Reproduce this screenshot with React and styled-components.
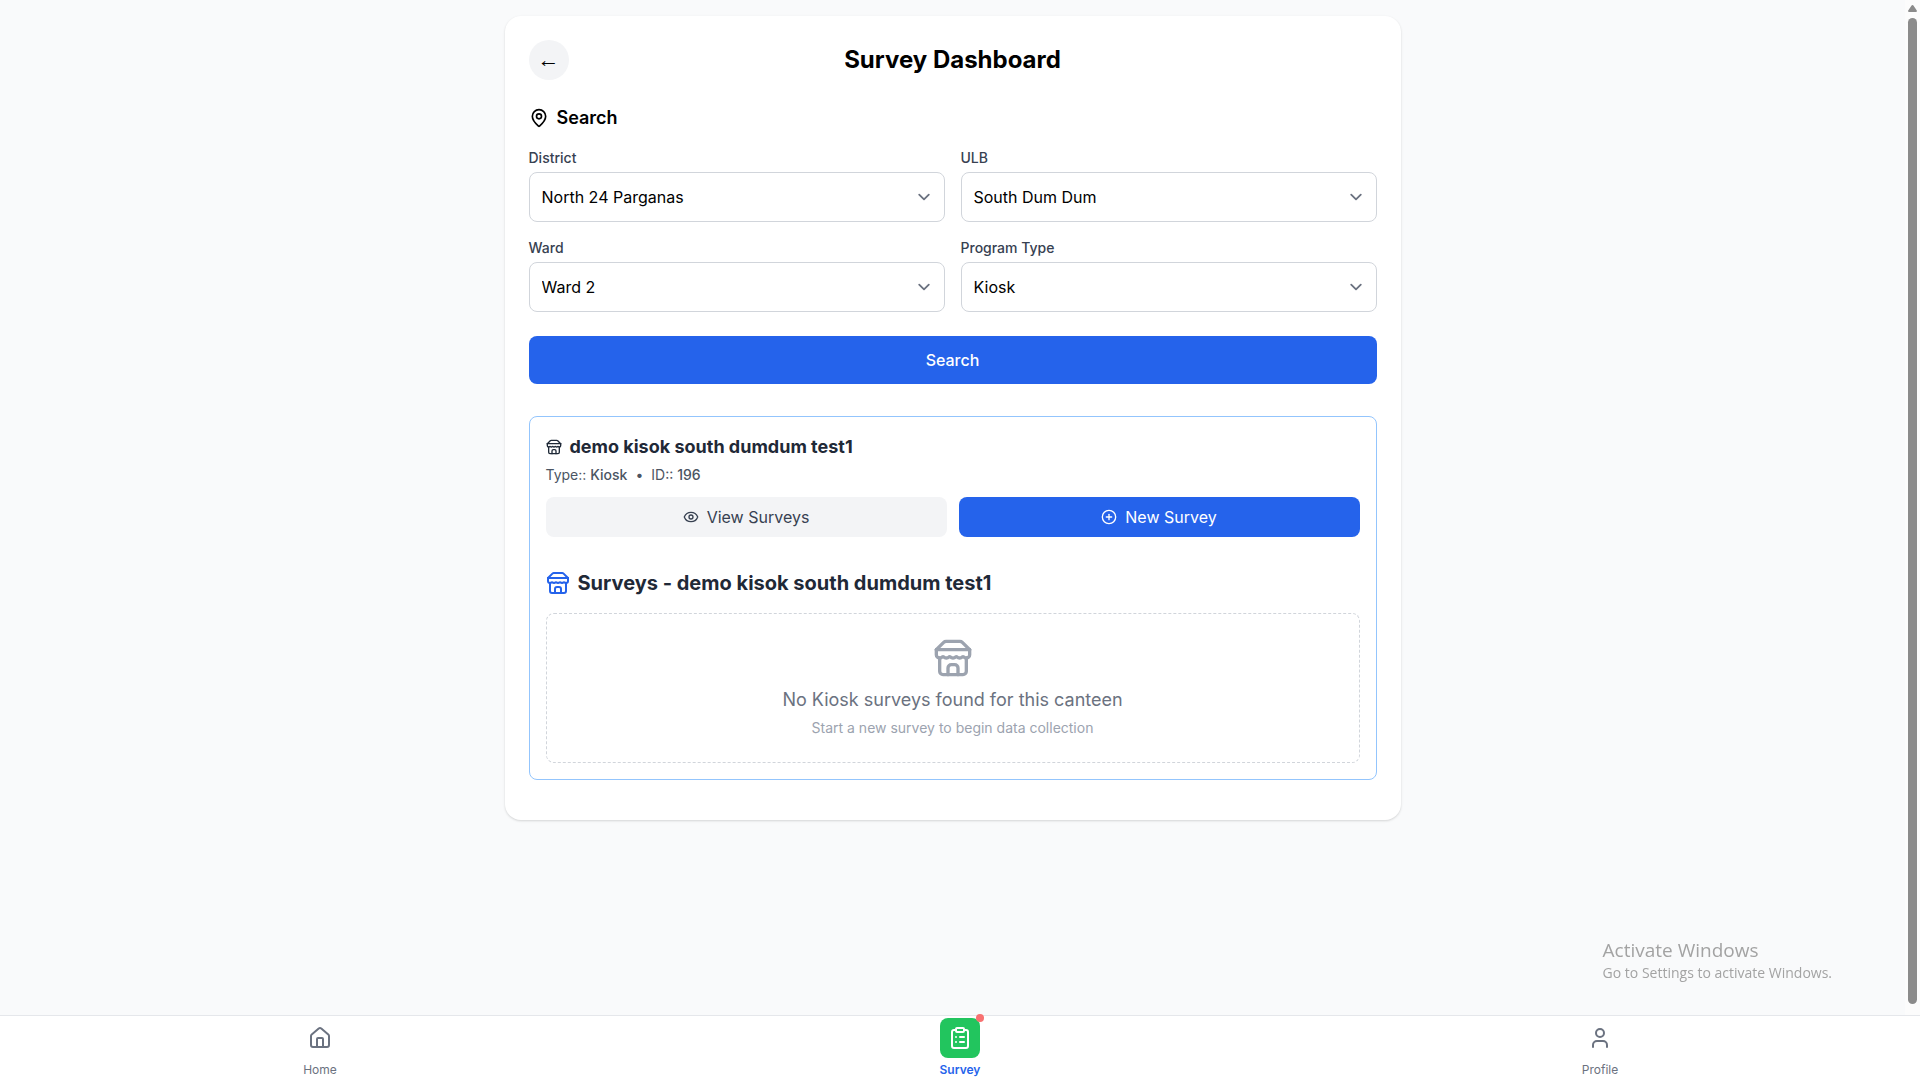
import React, { useState } from 'react'
import styled, { createGlobalStyle } from 'styled-components';
import { MapPin, Eye, CirclePlus, House, ClipboardList, User } from 'lucide-react';

const GlobalStyle = createGlobalStyle`
    *, *::before, *::after {
        box-sizing: border-box;
    }
    body {
        margin: 0;
        background: #f9fafb;
        color: #000;
        font-family: Inter, "Liberation Sans", sans-serif;
        font-size: 16px;
        line-height: 24px;
    }
    h1, h2, h3, p {
        margin: 0;
    }
    button, select {
        font: inherit;
    }
`;

const Page = styled.div`
    display: flex;
    flex-direction: column;
    min-height: 100vh;
`;

const ScrollArea = styled.div`
    flex: 1;
    display: flex;
`;

const Main = styled.main`
    flex: 1;
    padding: 16px;
`;

const ScrollBar = styled.div`
    width: 15px;
    display: flex;
    flex-direction: column;
    align-items: center;
    gap: 6px;
    padding: 5px 0 11px;
    background: #fcfcfc;
`;

const ScrollArrow = styled.svg`
    width: 9px;
    height: 7px;
    fill: #8b8b8b;
`;

const ScrollThumb = styled.div`
    flex: 1;
    width: 9px;
    border-radius: 5px;
    background: #8b8b8b;
`;

const Card = styled.div`
    max-width: 896px;
    margin: 0 auto;
    padding: 24px 24px 40px;
    border-radius: 16px;
    background: #fff;
    box-shadow: 0 1px 3px rgba(0, 0, 0, 0.1), 0 1px 2px rgba(0, 0, 0, 0.06);
`;

const Header = styled.header`
    display: grid;
    grid-template-columns: 40px 1fr 40px;
    align-items: center;
    margin-bottom: 24px;
`;

const BackButton = styled.button`
    width: 40px;
    height: 40px;
    padding: 0;
    border: none;
    border-radius: 50%;
    background: #f3f4f6;
    color: #000;
    font-family: "Liberation Serif", serif;
    font-size: 22px;
    cursor: pointer;
`;

const Title = styled.h1`
    font-size: 24px;
    line-height: 32px;
    font-weight: 700;
    text-align: center;
`;

const SectionTitle = styled.h2`
    display: flex;
    align-items: center;
    gap: 8px;
    margin-bottom: 16px;
    font-size: 18px;
    line-height: 28px;
    font-weight: 600;
`;

const Fields = styled.div`
    display: grid;
    grid-template-columns: 1fr 1fr;
    gap: 16px;
`;

const Field = styled.div`
    display: flex;
    flex-direction: column;
    gap: 4px;
`;

const Label = styled.label`
    font-size: 14px;
    line-height: 20px;
    font-weight: 500;
    color: #374151;
`;

const SelectWrap = styled.div`
    display: grid;
    align-items: center;
    & > * {
        grid-area: 1 / 1;
    }
`;

const Select = styled.select`
    appearance: none;
    width: 100%;
    height: 50px;
    padding: 0 40px 0 12px;
    border: 1px solid #d1d5db;
    border-radius: 8px;
    background: #fff;
    color: #000;
`;

const Chevron = styled.svg`
    justify-self: end;
    width: 24px;
    height: 24px;
    margin-right: 9px;
    fill: none;
    stroke: #6b7280;
    stroke-width: 1.5;
    stroke-linecap: round;
    stroke-linejoin: round;
    pointer-events: none;
`;

const SearchButton = styled.button`
    width: 100%;
    height: 48px;
    margin: 24px 0 32px;
    border: none;
    border-radius: 8px;
    background: #2563eb;
    color: #fff;
    font-weight: 500;
    cursor: pointer;
`;

const Result = styled.section`
    padding: 16px;
    border: 1px solid #93c5fd;
    border-radius: 8px;
`;

const KioskName = styled.h3`
    display: flex;
    align-items: center;
    gap: 8px;
    font-size: ${props => props.$large ? '20px' : '18px'};
    line-height: 28px;
    font-weight: 700;
    color: #1f2937;
`;

const Meta = styled.p`
    display: flex;
    gap: 8px;
    margin: 4px 0 12px;
    font-size: 14px;
    line-height: 20px;
    color: #4b5563;
    & b {
        font-weight: 500;
    }
`;

const Actions = styled.div`
    display: grid;
    grid-template-columns: 1fr 1fr;
    gap: 12px;
    margin-bottom: 32px;
`;

const ActionButton = styled.button`
    display: flex;
    align-items: center;
    justify-content: center;
    gap: 8px;
    height: 40px;
    border: none;
    border-radius: 8px;
    background: ${props => props.$primary ? '#2563eb' : '#f3f4f6'};
    color: ${props => props.$primary ? '#fff' : '#374151'};
    cursor: pointer;
`;

const Empty = styled.div`
    display: flex;
    flex-direction: column;
    align-items: center;
    margin-top: 16px;
    padding: 24px;
    border: 1px dashed #d1d5db;
    border-radius: 8px;
    color: #9ca3af;
`;

const EmptyTitle = styled.p`
    margin: 8px 0 4px;
    font-size: 18px;
    line-height: 28px;
    color: #6b7280;
`;

const EmptyText = styled.p`
    font-size: 14px;
    line-height: 20px;
`;

const BottomNav = styled.nav`
    display: grid;
    grid-template-columns: repeat(3, 1fr);
    padding: 2px 0;
    border-top: 1px solid #e5e7eb;
    background: #fff;
`;

const NavLink = styled.a`
    display: flex;
    flex-direction: column;
    align-items: center;
    gap: 4px;
    font-size: 12px;
    line-height: 16px;
    font-weight: ${props => props.$active ? 600 : 400};
    color: ${props => props.$active ? '#2563eb' : '#6b7280'};
    text-decoration: none;
`;

const NavIcon = styled.span`
    position: relative;
    display: flex;
    align-items: center;
    justify-content: center;
    width: 40px;
    height: 40px;
    border-radius: 8px;
    background: ${props => props.$active ? '#22c55e' : 'transparent'};
    color: ${props => props.$active ? '#fff' : '#6b7280'};
`;

const Dot = styled.span`
    position: absolute;
    top: -4px;
    right: -4px;
    width: 8px;
    height: 8px;
    border-radius: 50%;
    background: #f87171;
`;

const Watermark = styled.aside`
    position: fixed;
    right: 88px;
    bottom: 97px;
    font-family: "Open Sans", "Noto Sans", sans-serif;
    font-size: 14px;
    line-height: 20px;
    color: #a3a3a3;
    pointer-events: none;
    & strong {
        display: block;
        font-size: 19px;
        line-height: 26px;
        font-weight: 400;
    }
`;

// shop front with a scalloped awning
const StoreIcon = ({ size, color = 'currentColor' }) => (
    <svg width={size} height={size} viewBox="0 0 24 24" fill="none" stroke={color} strokeWidth="2"
        strokeLinecap="round" strokeLinejoin="round" aria-hidden="true">
        <path d="m2 7 4.41-4.41A2 2 0 0 1 7.83 2h8.34a2 2 0 0 1 1.42.59L22 7" />
        <path d="M4 12v8a2 2 0 0 0 2 2h12a2 2 0 0 0 2-2v-8" />
        <path d="M15 22v-4a2 2 0 0 0-2-2h-2a2 2 0 0 0-2 2v4" />
        <path d="M2 7h20" />
        <path d="M22 7v3a2 2 0 0 1-2 2a2.7 2.7 0 0 1-1.59-.63.7.7 0 0 0-.82 0A2.7 2.7 0 0 1 16 12a2.7 2.7 0 0 1-1.59-.63.7.7 0 0 0-.82 0A2.7 2.7 0 0 1 12 12a2.7 2.7 0 0 1-1.59-.63.7.7 0 0 0-.82 0A2.7 2.7 0 0 1 8 12a2.7 2.7 0 0 1-1.59-.63.7.7 0 0 0-.82 0A2.7 2.7 0 0 1 4 12a2 2 0 0 1-2-2V7" />
    </svg>
)

const filters = [
    { id: 'district', label: 'District', options: ['North 24 Parganas'] },
    { id: 'ulb', label: 'ULB', options: ['South Dum Dum'] },
    { id: 'ward', label: 'Ward', options: ['Ward 2'] },
    { id: 'program', label: 'Program Type', options: ['Kiosk'] },
]

const navItems = [
    { id: 'home', label: 'Home', Icon: House },
    { id: 'survey', label: 'Survey', Icon: ClipboardList },
    { id: 'profile', label: 'Profile', Icon: User },
]

const FilterField = ({ id, label, options }) => {
    const [value, setValue] = useState(options[0]);

    return (
        <Field>
            <Label htmlFor={id}>{label}</Label>
            <SelectWrap>
                <Select id={id} value={value} onChange={(e) => setValue(e.target.value)}>
                    {options.map(option => <option key={option} value={option}>{option}</option>)}
                </Select>
                <Chevron viewBox="0 0 20 20" aria-hidden="true">
                    <path d="M6 8l4 4 4-4" />
                </Chevron>
            </SelectWrap>
        </Field>
    )
}

const KioskResult = ({ name, type, id }) => (
    <Result>
        <KioskName><StoreIcon size={16} />{name}</KioskName>
        <Meta>
            <span>Type:: <b>{type}</b></span>
            <span>•</span>
            <span>ID:: <b>{id}</b></span>
        </Meta>
        <Actions>
            <ActionButton type="button"><Eye size={16} />View Surveys</ActionButton>
            <ActionButton type="button" $primary><CirclePlus size={16} />New Survey</ActionButton>
        </Actions>
        <KioskName $large><StoreIcon size={24} color="#2563eb" />Surveys - {name}</KioskName>
        <Empty>
            <StoreIcon size={40} />
            <EmptyTitle>No {type} surveys found for this canteen</EmptyTitle>
            <EmptyText>Start a new survey to begin data collection</EmptyText>
        </Empty>
    </Result>
)

const App = () => {
    const [active, setActive] = useState('survey');

    return (
        <Page>
            <GlobalStyle />
            <ScrollArea>
                <Main>
                    <Card>
                        <Header>
                            <BackButton type="button" aria-label="Back">←</BackButton>
                            <Title>Survey Dashboard</Title>
                        </Header>
                        <SectionTitle><MapPin size={20} />Search</SectionTitle>
                        <Fields>
                            {filters.map(filter => <FilterField key={filter.id} {...filter} />)}
                        </Fields>
                        <SearchButton type="button">Search</SearchButton>
                        <KioskResult name="demo kisok south dumdum test1" type="Kiosk" id={196} />
                    </Card>
                </Main>
                <ScrollBar aria-hidden="true">
                    <ScrollArrow viewBox="0 0 9 7"><path d="M4.5 0 Q5.2 0 5.6 .7 L8.8 5.6 Q9.2 7 8 7 H1 Q-.2 7 .2 5.6 L3.4 .7 Q3.8 0 4.5 0Z" /></ScrollArrow>
                    <ScrollThumb />
                </ScrollBar>
            </ScrollArea>
            <BottomNav>
                {navItems.map(({ id, label, Icon }) => (
                    <NavLink key={id} href={`#${id}`} $active={active === id} onClick={() => setActive(id)}>
                        <NavIcon $active={active === id}>
                            <Icon size={24} />
                            {active === id && <Dot />}
                        </NavIcon>
                        {label}
                    </NavLink>
                ))}
            </BottomNav>
            <Watermark>
                <strong>Activate Windows</strong>
                Go to Settings to activate Windows.
            </Watermark>
        </Page>
    )
}

export default App;
